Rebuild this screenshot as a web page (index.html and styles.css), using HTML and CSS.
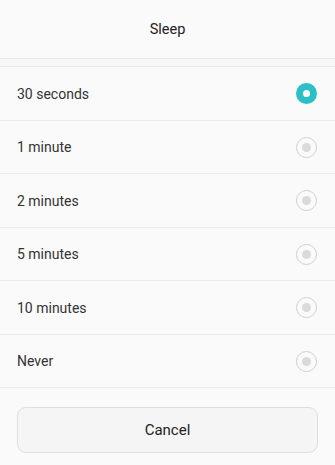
FILE: index.html
```html
<!DOCTYPE html>
<html>
<head>
<meta charset="utf-8">
<link rel="stylesheet" href="styles.css">
</head>
<body>
<div class="dialog">
  <div class="header">Sleep</div>
  <div class="spacer"></div>
  <ul class="list">
    <li class="row"><span class="label">30 seconds</span><span class="radio selected"></span></li>
    <li class="row"><span class="label">1 minute</span><span class="radio"></span></li>
    <li class="row"><span class="label">2 minutes</span><span class="radio"></span></li>
    <li class="row"><span class="label">5 minutes</span><span class="radio"></span></li>
    <li class="row"><span class="label">10 minutes</span><span class="radio"></span></li>
    <li class="row"><span class="label">Never</span><span class="radio"></span></li>
  </ul>
  <div class="footer"><button class="cancel">Cancel</button></div>
</div>
</body>
</html>
```
FILE: styles.css
```css
html, body {
  margin: 0;
  padding: 0;
  background: #fafafa;
  font-family: Roboto, "Noto Sans", sans-serif;
  color: #2b2b2b;
}
.dialog {
  width: 335px;
  height: 465px;
  display: flex;
  flex-direction: column;
}
.header {
  height: 59px;
  display: flex;
  align-items: center;
  justify-content: center;
  font-size: 14.5px;
  color: #222;
  border-bottom: 1px solid #e9e9e9;
  box-sizing: border-box;
  padding-top: 1px;
}
.spacer {
  height: 7px;
  background: #f7f7f7;
}
.list {
  list-style: none;
  margin: 0;
  padding: 0;
  border-top: 1px solid #e9e9e9;
}
.row {
  height: 51.5px;
  border-bottom: 1px solid #ebebeb;
  display: flex;
  align-items: center;
  justify-content: space-between;
  padding: 1px 17px 0 17px;
  box-sizing: content-box;
}
.label {
  font-size: 14px;
  color: #333;
}
.radio {
  width: 21px;
  height: 21px;
  border-radius: 50%;
  box-sizing: border-box;
  border: 1px solid #cfcfcf;
  display: flex;
  align-items: center;
  justify-content: center;
  margin-right: 1px;
}
.radio::after {
  content: "";
  width: 9px;
  height: 9px;
  border-radius: 50%;
  background: #dadada;
}
.radio.selected {
  border: 7px solid #2bbfc6;
  background: #fff;
}
.radio.selected::after {
  display: none;
}
.footer {
  padding: 19px 17px 0 17px;
}
.cancel {
  width: 301px;
  height: 46px;
  border: 1px solid #dedede;
  border-radius: 9px;
  background: #f5f5f5;
  font-family: Roboto, "Noto Sans", sans-serif;
  font-size: 15px;
  color: #222;
}
```
